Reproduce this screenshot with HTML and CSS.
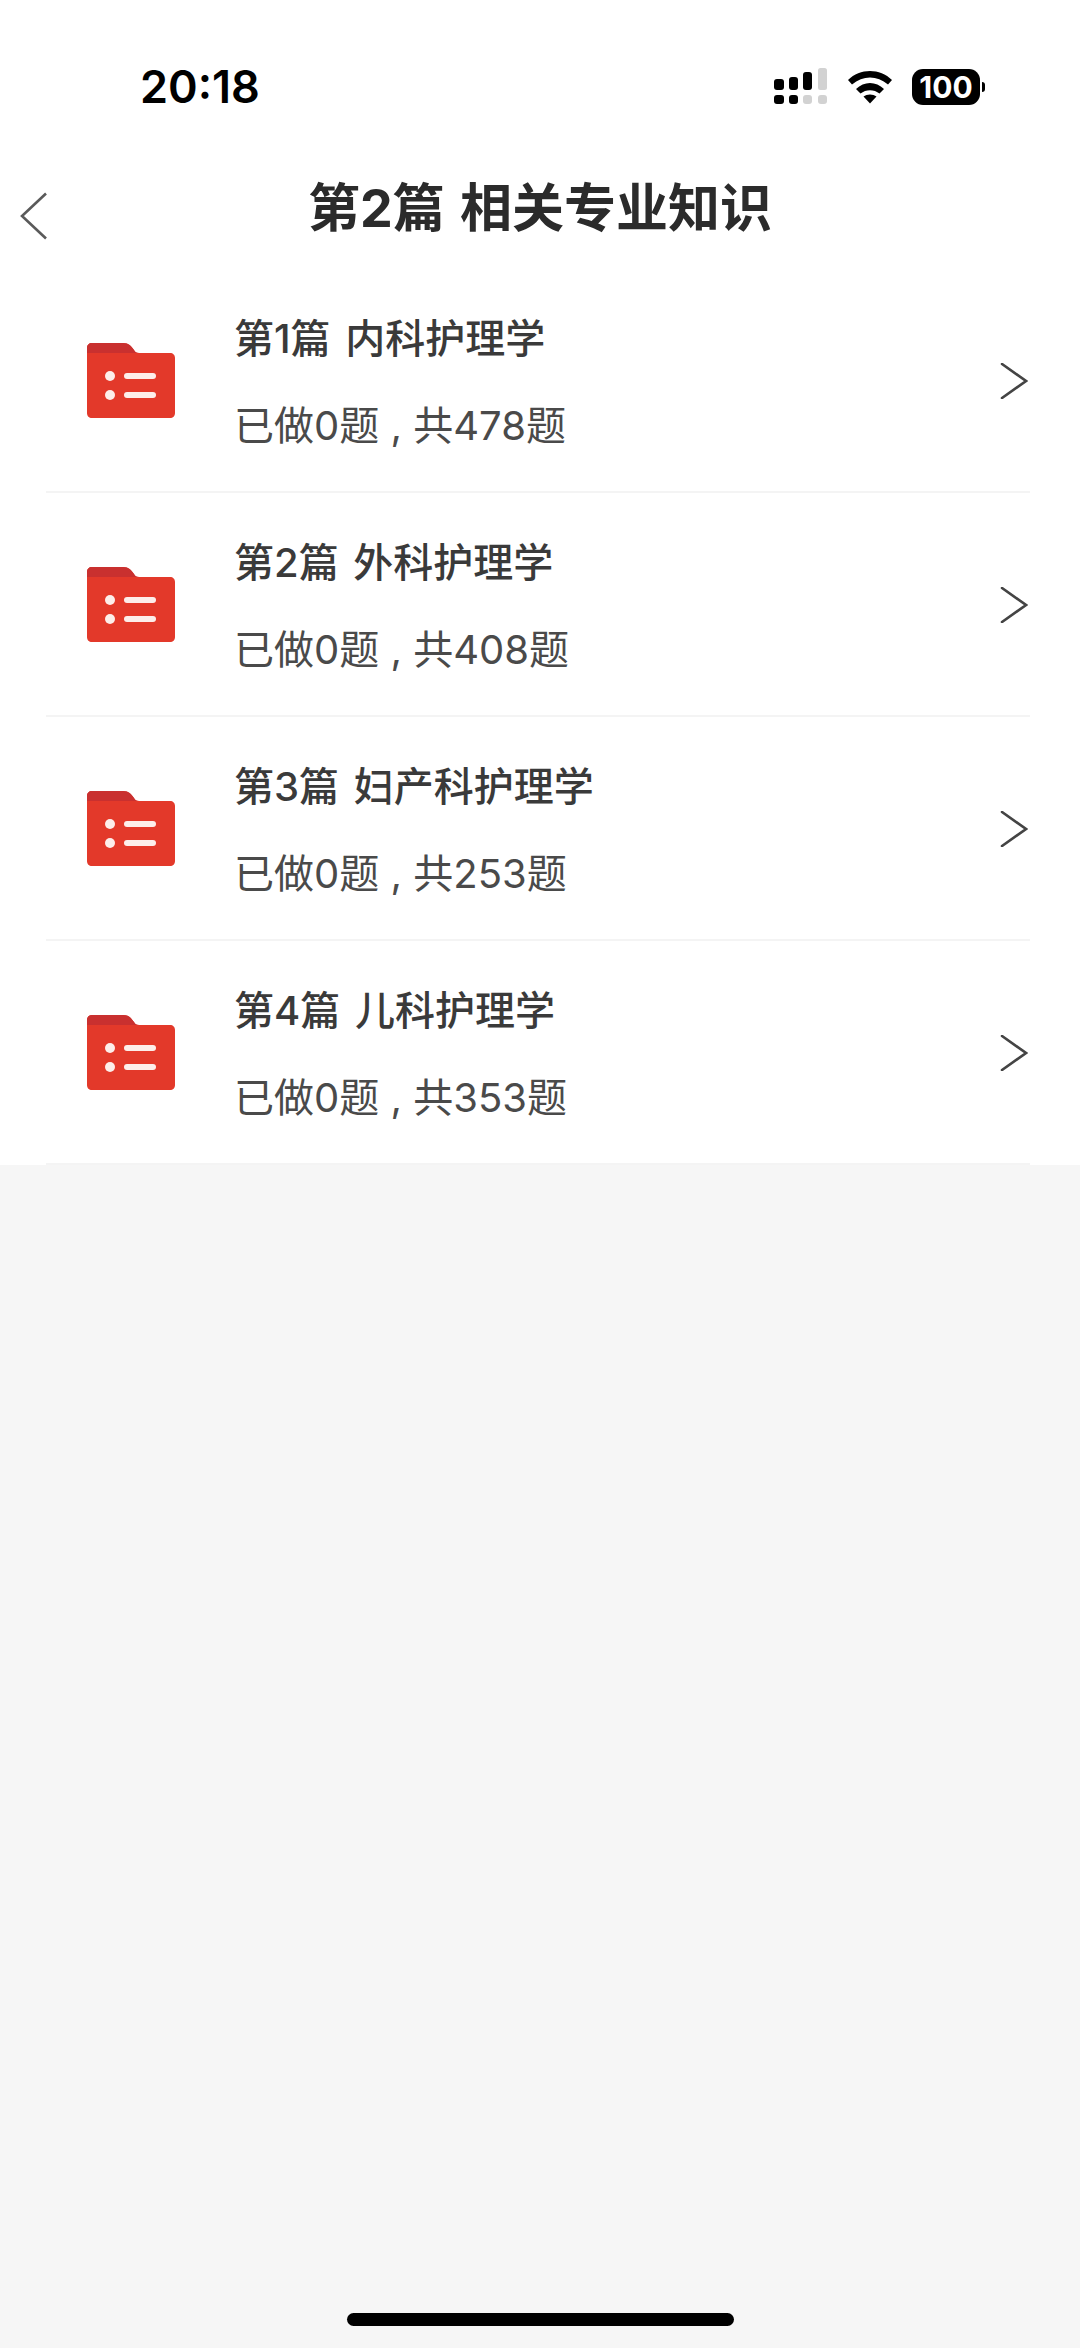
FILE: index.html
```html
<!DOCTYPE html>
<html lang="zh-CN">
<head>
  <meta charset="UTF-8">
  <meta name="viewport" content="width=device-width, initial-scale=1.0">
  <title>第2篇 相关专业知识</title>
  <link rel="stylesheet" href="styles.css">
</head>
<body>
<div class="page">
  <div class="top">
    <div class="status">
      <div class="time">20:18</div>
      <div class="status-icons">
        <svg class="signal" width="54" height="37" viewBox="0 0 54 37">
          <rect x="0" y="11" width="10" height="11" rx="3" fill="#000"/>
          <rect x="15" y="9" width="9" height="13" rx="3" fill="#000"/>
          <rect x="29" y="4" width="9" height="18" rx="3" fill="#000"/>
          <rect x="44" y="0" width="9" height="22" rx="2.5" fill="#d2d2d2"/>
          <rect x="0" y="27" width="10" height="9" rx="3" fill="#000"/>
          <rect x="15" y="27" width="9" height="9" rx="3" fill="#000"/>
          <rect x="29" y="27" width="9" height="9" rx="3" fill="#d2d2d2"/>
          <rect x="44" y="27" width="9" height="9" rx="3" fill="#d2d2d2"/>
        </svg>
        <svg class="wifi" width="46" height="35" viewBox="0 0 46 35">
          <path d="M1 11 C13 -1 33 -1 45 11 L41 15.5 C30 6 16 6 5 15.5 Z" fill="#000"/>
          <path d="M9 20 C17 12 29 12 37 20 L32.5 24.5 C27 20 19 20 13.5 24.5 Z" fill="#000"/>
          <path d="M16.5 27.5 C20 24.8 26 24.8 29.5 27.5 L23 34.5 Z" fill="#000"/>
        </svg>
        <div class="battery">
          <div class="battery-body">100</div>
          <div class="battery-tip"></div>
        </div>
      </div>
    </div>
    <div class="nav">
      <svg class="back" width="28" height="48" viewBox="0 0 28 48">
        <path d="M26 1.5 L2 24 L26 46.5" fill="none" stroke="#5a5a5a" stroke-width="2.6"/>
      </svg>
      <h1 class="nav-title">第2篇 相关专业知识</h1>
    </div>
  </div>

  <div class="list">
    <div class="row">
      <div class="row-inner">
        <svg class="folder" width="88" height="75" viewBox="0 0 88 75">
          <use href="#folder-icon"/>
        </svg>
        <div class="row-text">
          <div class="row-title">第1篇 内科护理学</div>
          <div class="row-sub">已做0题 , 共478题</div>
        </div>
        <svg class="arrow" width="28" height="36" viewBox="0 0 28 36">
          <path d="M2 1 L26 18 L2 35" fill="none" stroke="#444" stroke-width="2.6" stroke-linecap="round"/>
        </svg>
      </div>
    </div>
    <div class="row">
      <div class="row-inner">
        <svg class="folder" width="88" height="75" viewBox="0 0 88 75">
          <use href="#folder-icon"/>
        </svg>
        <div class="row-text">
          <div class="row-title">第2篇 外科护理学</div>
          <div class="row-sub">已做0题 , 共408题</div>
        </div>
        <svg class="arrow" width="28" height="36" viewBox="0 0 28 36">
          <path d="M2 1 L26 18 L2 35" fill="none" stroke="#444" stroke-width="2.6" stroke-linecap="round"/>
        </svg>
      </div>
    </div>
    <div class="row">
      <div class="row-inner">
        <svg class="folder" width="88" height="75" viewBox="0 0 88 75">
          <use href="#folder-icon"/>
        </svg>
        <div class="row-text">
          <div class="row-title">第3篇 妇产科护理学</div>
          <div class="row-sub">已做0题 , 共253题</div>
        </div>
        <svg class="arrow" width="28" height="36" viewBox="0 0 28 36">
          <path d="M2 1 L26 18 L2 35" fill="none" stroke="#444" stroke-width="2.6" stroke-linecap="round"/>
        </svg>
      </div>
    </div>
    <div class="row">
      <div class="row-inner">
        <svg class="folder" width="88" height="75" viewBox="0 0 88 75">
          <use href="#folder-icon"/>
        </svg>
        <div class="row-text">
          <div class="row-title">第4篇 儿科护理学</div>
          <div class="row-sub">已做0题 , 共353题</div>
        </div>
        <svg class="arrow" width="28" height="36" viewBox="0 0 28 36">
          <path d="M2 1 L26 18 L2 35" fill="none" stroke="#444" stroke-width="2.6" stroke-linecap="round"/>
        </svg>
      </div>
    </div>
  </div>

  <div class="filler">
    <div class="home-bar"></div>
  </div>
</div>

<svg class="defs" width="0" height="0">
  <defs>
    <g id="folder-icon">
      <path d="M5 0 H36 C42 0 44 3 47 7 C48 9 49 10 52 10 H83 C86 10 88 12 88 15 V70 C88 73 86 75 83 75 H5 C2 75 0 73 0 70 V5 C0 2 2 0 5 0 Z" fill="#e3392a"/>
      <path d="M5 0 H36 C42 0 44 3 47 7 C48 9 49 10 52 10 H0 V5 C0 2 2 0 5 0 Z" fill="#c9302f"/>
      <circle cx="23" cy="33" r="5" fill="#fdeeea"/>
      <circle cx="23" cy="52" r="5" fill="#fdeeea"/>
      <rect x="37" y="30" width="32" height="6" rx="3" fill="#fdeeea"/>
      <rect x="37" y="49" width="32" height="6" rx="3" fill="#fdeeea"/>
    </g>
  </defs>
</svg>
</body>
</html>
```

FILE: styles.css
```css
* {
  box-sizing: border-box;
}

body {
  margin: 0;
  background-color: #f6f6f6;
  font-family: "Inter", "Noto Sans CJK SC", sans-serif;
}

.page {
  display: flex;
  flex-direction: column;
  width: 1080px;
  height: 2348px;
  overflow: hidden;
}

.top {
  background-color: #ffffff;
}

.status {
  display: flex;
  justify-content: space-between;
  align-items: center;
  height: 69px;
  margin-top: 52px;
  padding: 0 95px 0 140px;
}

.time {
  font-family: "Inter", sans-serif;
  font-size: 45px;
  font-weight: 600;
  color: #000000;
}

.status-icons {
  display: flex;
  align-items: center;
  gap: 19px;
}

.battery {
  display: flex;
  align-items: center;
  gap: 2px;
}

.battery-body {
  width: 68px;
  height: 36px;
  border-radius: 11px;
  background-color: #000000;
  color: #ffffff;
  font-family: "Inter", sans-serif;
  font-size: 30px;
  font-weight: 700;
  line-height: 36px;
  text-align: center;
}

.battery-tip {
  width: 3px;
  height: 10px;
  border-radius: 0 3px 3px 0;
  background-color: #000000;
}

.nav {
  display: flex;
  align-items: center;
  height: 148px;
  padding: 42px 0 0 20px;
}

.nav-title {
  margin: 0 0 24px 260px;
  font-size: 52px;
  font-weight: 700;
  word-spacing: 3px;
  color: #2b2b2b;
  white-space: nowrap;
}

.list {
  background-color: #ffffff;
}

.row {
  height: 224px;
  padding: 0 50px 0 46px;
}

.row-inner {
  display: flex;
  align-items: center;
  height: 100%;
  padding: 0 2px 0 41px;
  border-bottom: 2px solid #f4f4f4;
}

.row-text {
  flex: 1;
  margin: 5px 0 0 59px;
}

.row-title {
  font-size: 40px;
  font-weight: 500;
  line-height: 52px;
  word-spacing: 4px;
  color: #3a3a3a;
}

.row-sub {
  margin-top: 35px;
  font-size: 40px;
  line-height: 52px;
  color: #4a4a4a;
}

.arrow {
  margin-top: 2px;
}

.filler {
  display: flex;
  flex: 1;
  flex-direction: column;
  justify-content: flex-end;
  align-items: center;
  padding-bottom: 22px;
}

.home-bar {
  width: 387px;
  height: 13px;
  border-radius: 7px;
  background-color: #000000;
}

.defs {
  display: block;
}
```
